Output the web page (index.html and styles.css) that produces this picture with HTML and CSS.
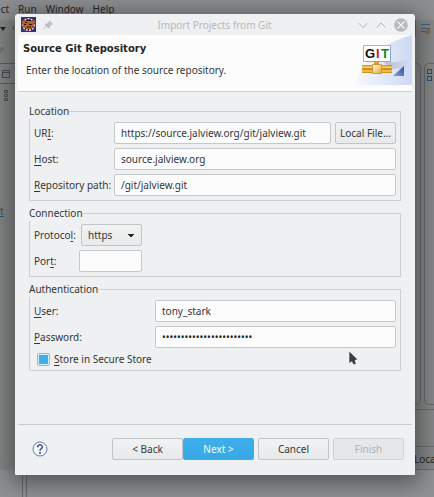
FILE: index.html
```html
<!DOCTYPE html>
<html lang="en">
<head>
<meta charset="utf-8">
<meta name="viewport" content="width=device-width, initial-scale=1">
<title>Import Projects from Git</title>
<link rel="stylesheet" href="styles.css">
</head>
<body>
<div class="desktop">
  <div class="workbench">
    <nav class="menu"><span>ect</span><span>Run</span><span>Window</span><span>Help</span></nav>
    <div class="work-area">
      <div class="left-strip">
        <svg class="strip-icons" width="15" height="100" viewBox="0 0 15 100">
          <path d="M0 7h6l-3 4z" fill="#222"/>
          <path d="M14 5.500a3 3 0 0 0 0 5z" fill="#346b3c"/>
          <path d="M0 33l3-6M0 28l4 2" stroke="#747474" stroke-width="2"/>
          <path d="M0 43.500h15M0 63.500h15" stroke="#5d5e5f"/>
          <path d="M2.500 50.500h7v7h-7zM2.500 52.500h7" fill="none" stroke="#494a4c"/>
          <path d="M4.500 70.500h3v2h-3zM4.500 74.500h3v2h-3zM4.500 78.500h3v2h-3z" fill="none" stroke="#4b4c4e"/>
        </svg>
        <span class="strip-link">t</span>
      </div>
      <div class="right-strip">
        <svg class="strip-tools" width="20" height="43" viewBox="0 0 20 43">
          <path d="M5.500 0v17" stroke="#606163"/>
          <path d="M11 4.500h9M11 8.500h9M11 11.500h5" stroke="#41617c"/>
          <path d="M14 12l5-4 1 1v5l-3 1z" fill="#806c50"/>
        </svg>
        <div class="panels"><div class="panel-end"></div><div class="panel-start"><i></i><i></i></div></div>
        <div class="status-line"></div>
        <span class="status-text">Loca</span>
      </div>
    </div>
    <div class="bottom-strip"></div>
  </div>

  <main class="dialog">
    <header class="titlebar">
      <svg class="app-icon" width="15" height="15" viewBox="0 0 15 15">
        <path d="M0 0h15v15H0z" fill="#3f2c73"/>
        <circle cx="7.500" cy="7.500" r="5.800" fill="#1d1518" stroke="#e4dfe9" stroke-width="1.500" stroke-dasharray="2 1.200"/>
        <path d="M2 3l4 1h5l3-1-1 5-3 4H6L2 9l-1-3z" fill="#b4601f"/>
        <path d="M4 5.500h2M3 7.500h2m3 0h3M6 10h4" stroke="#2b1712"/>
      </svg>
      <svg class="pin" width="10" height="10" viewBox="0 0 10 10">
        <path d="M6 0l4 4-1 .500-2 2-.500 2L5 8 3.500 6.500.500 9.500 0 9l3-3L1.500 4.500 2 4l2-.500 2-2z" fill="#bdc1c4"/>
      </svg>
      <h1 class="window-title">Import Projects from Git</h1>
      <div class="window-buttons">
        <button type="button" aria-label="Minimize"><svg width="10" height="14" viewBox="0 0 10 14"><path d="M.500 5l4.500 4.500L9.500 5" fill="none" stroke="#b0b4b6"/></svg></button>
        <button type="button" aria-label="Maximize"><svg width="10" height="14" viewBox="0 0 10 14"><path d="M.500 9.500L5 5l4.500 4.500" fill="none" stroke="#b0b4b6"/></svg></button>
        <button type="button" aria-label="Close"><svg width="14" height="14" viewBox="0 0 14 14"><circle cx="7" cy="7" r="6.800" fill="#b7babc"/><path d="M3.500 3.500l7 7M10.500 3.500l-7 7" stroke="#f4f5f6" stroke-width="1.200"/></svg></button>
      </div>
    </header>

    <section class="banner">
      <div class="banner-text">
        <h2>Source Git Repository</h2>
        <p>Enter the location of the source repository.</p>
      </div>
      <svg class="banner-art" width="58" height="50" viewBox="0 0 58 50" role="img" aria-label="GIT">
        <defs>
          <linearGradient id="sweep" x1="0" y1="0" x2="1" y2="0"><stop offset="0" stop-color="#f8f9fd"/><stop offset="1" stop-color="#ccd8f3"/></linearGradient>
          <linearGradient id="shade" x1="0" y1="0" x2="1" y2="0"><stop offset="0" stop-color="#b9bfd0"/><stop offset="1" stop-color="#d3dcf2"/></linearGradient>
          <linearGradient id="pipe" x1="0" y1="0" x2="0" y2="1"><stop offset="0" stop-color="#c98a12"/><stop offset=".3" stop-color="#ffd768"/><stop offset=".5" stop-color="#b97708"/><stop offset=".75" stop-color="#ffd05a"/><stop offset="1" stop-color="#bd7b0e"/></linearGradient>
          <linearGradient id="joint" x1="0" y1="0" x2="1" y2="1"><stop offset="0" stop-color="#fffbe6"/><stop offset="1" stop-color="#e2a730"/></linearGradient>
          <linearGradient id="corner" x1="0" y1="1" x2="1" y2="0"><stop offset="0" stop-color="#89a4d4"/><stop offset="1" stop-color="#2c4c95"/></linearGradient>
        </defs>
        <path d="M1 50C8 25 27 8 58 0v50z" fill="url(#sweep)"/>
        <path d="M30 27c12 1 20-1 28-4v7c-8 3-14 4-22 4z" fill="url(#shade)"/>
        <path d="M9.500 10.500h27v16h-27z" fill="#fff" stroke="#b9b69e"/>
        <path d="M9.500 26.500h27v-16" fill="none" stroke="#94a8bd"/>
        <g class="git-word"><text x="11" y="23" fill="#111">G</text><text x="22" y="23" fill="#d4141c">I</text><text x="27" y="23" fill="#078a20">T</text></g>
        <path d="M8 30h30v8H8z" fill="url(#pipe)"/>
        <path d="M20 27h5v3h-5z" fill="#d6a038"/>
        <path d="M18.500 29.500h9v9h-9z" fill="url(#joint)" stroke="#cf9736"/>
        <path d="M50 31v10H39z" fill="url(#corner)"/>
      </svg>
    </section>

    <form class="form">
      <fieldset>
        <legend>Location</legend>
        <div class="row"><label class="wide-label" for="uri">UR<u>I</u>:</label><input class="grow" id="uri" type="text" value="https://source.jalview.org/git/jalview.git"><button class="btn file" type="button">Local File...</button></div>
        <div class="row"><label class="wide-label" for="host"><u>H</u>ost:</label><input class="grow" id="host" type="text" value="source.jalview.org"></div>
        <div class="row"><label class="wide-label" for="path"><u>R</u>epository path:</label><input class="grow" id="path" type="text" value="/git/jalview.git"></div>
      </fieldset>
      <fieldset>
        <legend>Connection</legend>
        <div class="row"><label class="short-label" for="protocol">Protoco<u>l</u>:</label><select id="protocol"><option>https</option></select></div>
        <div class="row"><label class="short-label" for="port">Por<u>t</u>:</label><input class="port" id="port" type="text"></div>
      </fieldset>
      <fieldset>
        <legend>Authentication</legend>
        <div class="row"><label class="auth-label" for="user"><u>U</u>ser:</label><input class="grow" id="user" type="text" value="tony_stark"></div>
        <div class="row"><label class="auth-label" for="password"><u>P</u>assword:</label><input class="grow" id="password" type="password" value="abcdefghijklmnopqrstuvwx"></div>
        <div class="row check-row"><input id="store" type="checkbox" checked><label for="store"><u>S</u>tore in Secure Store</label></div>
      </fieldset>
    </form>

    <footer class="actions">
      <button class="help" type="button" aria-label="Help"><svg width="16" height="16" viewBox="0 0 16 16"><circle cx="8" cy="8" r="7" fill="#f5f7fb" stroke="#65779b"/><path d="M5.700 6.200C5.700 2.900 10.300 3.100 10.300 5.900 10.300 7.600 8 7.700 8 9.700" fill="none" stroke="#4c628f" stroke-width="1.700"/><circle cx="8" cy="11.900" r="1.100" fill="#4c628f"/></svg></button>
      <div class="steps"><button class="btn" type="button">&lt; Back</button><button class="btn primary" type="button">Next &gt;</button></div>
      <button class="btn" type="button">Cancel</button>
      <button class="btn" type="button" disabled>Finish</button>
    </footer>
    <svg class="cursor" width="12" height="17" viewBox="0 0 12 17"><path d="M2 1v12.500l2.800-1.800 1.800 3.300 2.600-1.200-1.200-3.300 2.800-1z" fill="#3b3d3f" stroke="#fff" stroke-width=".6"/></svg>
  </main>
</div>
</body>
</html>
```
FILE: styles.css
```css
* { box-sizing: border-box; }

body {
  margin: 0;
  font: 10px/16px "Noto Sans", sans-serif;
  color: #31363b;
}

button, input, select { font: inherit; color: inherit; }

.desktop {
  display: grid;
  min-height: 100vh;
  overflow: hidden;
  background: #909193;
}

.workbench, .dialog { grid-area: 1 / 1; }

.workbench {
  display: flex;
  flex-direction: column;
  color: #242527;
}

.menu {
  display: flex;
  gap: 9px;
  height: 20px;
  padding-top: 1px;
  margin-left: -5px;
  background: #8e8f91;
}

.work-area {
  flex: 1;
  display: flex;
  justify-content: space-between;
  background: #858686;
}

.left-strip { width: 15px; }

.strip-icons { display: block; margin-bottom: 83px; }

.strip-link { color: #28506a; text-decoration: underline; }

.right-strip {
  display: flex;
  flex-direction: column;
  width: 20px;
}

.strip-tools { display: block; margin-left: -4px; }

.panels {
  flex: 1;
  display: flex;
  gap: 3px;
  margin-left: -4px;
  padding-bottom: 4px;
  border-bottom: 1px solid #67686a;
}

.panel-end {
  width: 14px;
  border: 1px solid #68696b;
  border-left: 0;
  border-radius: 0 5px 5px 0;
}

.panel-start {
  flex: 1;
  display: flex;
  flex-direction: column;
  gap: 2px;
  padding: 5px 2px;
  border: 1px solid #68696b;
  border-right: 0;
  border-radius: 5px 0 0 5px;
}

.panel-start i {
  width: 5px;
  height: 5px;
  border: 1px solid #254e75;
}

.status-line { height: 36px; }

.status-text {
  height: 24px;
  padding-top: 4px;
  border: 1px solid #6b6c6e;
  border-width: 1px 0;
  white-space: nowrap;
}

.bottom-strip {
  width: 5px;
  height: 27px;
  margin-left: 22px;
  border: 1px solid #68696b;
  border-width: 0 1px;
}

.dialog {
  position: relative;
  display: flex;
  flex-direction: column;
  margin: 14px 19px 22px 15px;
  padding: 0 3px;
  border-radius: 3px 3px 1px 1px;
  background: #eff0f1;
  box-shadow: 0 4px 22px 4px rgba(20, 22, 25, .5);
}

.titlebar {
  display: flex;
  align-items: center;
  gap: 7px;
  height: 21px;
  padding: 0 4px 0 3px;
}

.window-title {
  flex: 1;
  margin: 0;
  padding-left: 18px;
  font: inherit;
  text-align: center;
  color: #b6b9bb;
}

.window-buttons { display: flex; gap: 8px; }

.window-buttons button, .help {
  display: flex;
  padding: 0;
  border: 0;
  background: none;
}

.banner {
  display: flex;
  justify-content: space-between;
  height: 57px;
  border-bottom: 1px solid #cdcfd0;
  background: #fcfcfc;
}

.banner-text { padding: 6px 5px; }

.banner h2 {
  margin: 0 0 5px;
  font: bold 10px/16px "DejaVu Sans", sans-serif;
  color: #232629;
}

.banner p { margin: 0; padding-left: 3px; }

.git-word { font: bold 13px "Liberation Sans", sans-serif; }

.form {
  display: flex;
  flex-direction: column;
  gap: 4px;
  padding: 11px;
}

fieldset {
  display: flex;
  flex-direction: column;
  gap: 4px;
  min-width: 0;
  margin: 0;
  padding: 3px 4px 4px;
  border: 1px solid #cdcfd1;
}

legend {
  margin-left: -5px;
  padding: 0;
  background: #eff0f1;
}

.row { display: flex; align-items: center; height: 22px; }

u { text-underline-offset: 2px; }

.wide-label { width: 80px; white-space: nowrap; }
.short-label { width: 45px; white-space: nowrap; }
.auth-label { width: 121px; white-space: nowrap; }

input[type="text"], input[type="password"] {
  min-width: 0;
  height: 22px;
  padding: 0 6px;
  border: 1px solid #c5c8ca;
  border-radius: 2px;
  background: #fcfcfc;
}

.grow { flex: 1; }

.port { width: 63px; }

#password { color: #232629; }

select {
  width: 61px;
  height: 22px;
  margin-left: 2px;
  padding: 0 6px;
  appearance: none;
  border: 1px solid #c2c5c7;
  border-radius: 2px;
  background: linear-gradient(135deg, #232629 50%, transparent 50%) 49px 9px / 4px 4px no-repeat,
    linear-gradient(225deg, #232629 50%, transparent 50%) 45px 9px / 4px 4px no-repeat,
    linear-gradient(#f1f2f2, #e8e9ea);
}

.btn {
  width: 71px;
  height: 22px;
  padding: 0;
  border: 1px solid #c2c5c7;
  border-radius: 2px;
  background: linear-gradient(#f1f2f2, #e8e9ea);
  white-space: nowrap;
}

.btn.file { width: 61px; margin-left: 4px; }

.btn.primary {
  border-color: #3daee9;
  background: linear-gradient(#3daee9, #38a9e6);
  color: #fcfcfc;
}

.btn:disabled {
  border-color: #d2d4d6;
  background: #e6e7e8;
  color: #b0b3b5;
}

.check-row { height: 14px; gap: 4px; padding-left: 3px; }

.check-row input {
  appearance: none;
  width: 13px;
  height: 13px;
  margin: 0;
  border: 1px solid #7cc2e8;
  border-radius: 2px;
  background: #3daee9 content-box;
  padding: 1px;
  box-shadow: inset 0 0 0 1px #d8edf8;
}

.actions {
  display: flex;
  align-items: center;
  gap: 4px;
  height: 51px;
  margin-top: auto;
  padding: 0 8px 3px 14px;
  border-top: 1px solid #c9cccd;
}

.steps { display: flex; margin-left: auto; }

.cursor { position: absolute; right: 56px; bottom: 108px; }
```
